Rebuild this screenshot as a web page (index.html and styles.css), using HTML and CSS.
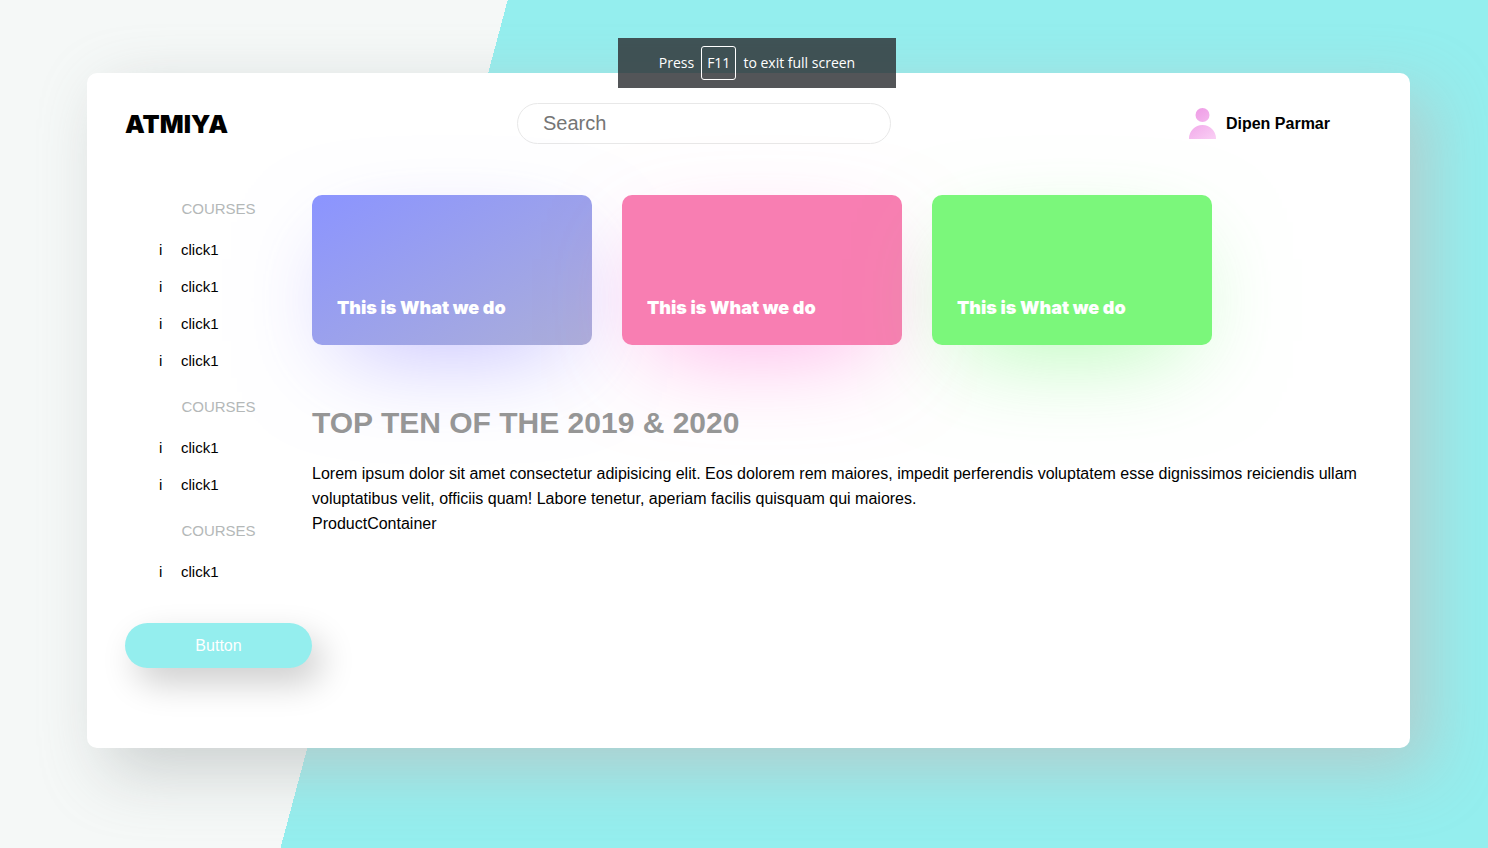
FILE: index.html
```html
<!DOCTYPE html>
<html lang="en">
<head>
<meta charset="utf-8">
<title>ATMIYA</title>
<meta name="viewport" content="width=device-width, initial-scale=1">
<link rel="stylesheet" href="styles.css">
</head>
<body>
<div class="panel">
  <header class="header">
    <h1 class="logo">ATMIYA</h1>
    <input class="search" type="search" placeholder="Search" aria-label="Search">
    <div class="user">
      <svg class="avatar" viewBox="0 0 28 32" aria-hidden="true">
        <defs>
          <linearGradient id="skin" gradientUnits="userSpaceOnUse" x1="4" y1="1" x2="26" y2="33">
            <stop offset="0" stop-color="#ee9ae5"/>
            <stop offset="1" stop-color="#fad0f5"/>
          </linearGradient>
        </defs>
        <circle cx="14.500" cy="7" r="7" fill="url(#skin)"/>
        <path d="M1 31V30.500A13.500 13.500 0 0 1 28 30.500V31Z" fill="url(#skin)"/>
      </svg>
      <span class="user-name">Dipen Parmar</span>
    </div>
  </header>
  <div class="body">
    <nav class="sidebar">
      <section class="group">
        <h2 class="group-title">COURSES</h2>
        <a class="item" href="#"><span class="item-icon">i</span>click1</a>
        <a class="item" href="#"><span class="item-icon">i</span>click1</a>
        <a class="item" href="#"><span class="item-icon">i</span>click1</a>
        <a class="item" href="#"><span class="item-icon">i</span>click1</a>
      </section>
      <section class="group">
        <h2 class="group-title">COURSES</h2>
        <a class="item" href="#"><span class="item-icon">i</span>click1</a>
        <a class="item" href="#"><span class="item-icon">i</span>click1</a>
      </section>
      <section class="group">
        <h2 class="group-title">COURSES</h2>
        <a class="item" href="#"><span class="item-icon">i</span>click1</a>
      </section>
      <button class="button" type="button">Button</button>
    </nav>
    <main class="main">
      <div class="cards">
        <article class="card card-blue">This is What we do</article>
        <article class="card card-pink">This is What we do</article>
        <article class="card card-green">This is What we do</article>
      </div>
      <h2 class="title">TOP TEN OF THE 2019 &amp; 2020</h2>
      <p class="text">Lorem ipsum dolor sit amet consectetur adipisicing elit. Eos dolorem rem maiores, impedit perferendis voluptatem esse dignissimos reiciendis ullam voluptatibus velit, officiis quam! Labore tenetur, aperiam facilis quisquam qui maiores.</p>
      <div class="text">ProductContainer</div>
    </main>
  </div>
</div>
<div class="toast" role="status"><span>Press</span><kbd class="key">F11</kbd><span>to exit full screen</span></div>
</body>
</html>
```
FILE: styles.css
```css
* {
  box-sizing: border-box;
  margin: 0;
}

body {
  display: grid;
  min-height: 100vh;
  padding: 73px 78px 100px 87px;
  background: linear-gradient(105deg, #f5f8f7 29.6%, #94eeee 29.6%);
  font-family: "Liberation Sans", Arial, sans-serif;
  font-size: 16px;
  color: #000;
}

.panel {
  padding: 30px 38px;
  border-radius: 10px;
  background: #fff;
  box-shadow: 20px 22px 65px rgba(188, 194, 194, 0.75);
}

.header {
  display: flex;
  align-items: center;
  justify-content: space-between;
  padding-right: 42px;
}

.logo {
  font-family: Inter, "Liberation Sans", sans-serif;
  font-size: 25px;
  font-weight: 900;
  line-height: 28px;
}

.search {
  width: 374px;
  height: 41px;
  margin-right: 8px;
  padding: 0 25px;
  border: 1px solid #e8e8e8;
  border-radius: 21px;
  background: transparent;
  font-family: inherit;
  font-size: 20px;
  outline: none;
}

.search::placeholder {
  color: #757575;
}

.user {
  display: flex;
  align-items: center;
  gap: 10px;
}

.avatar {
  width: 28px;
  height: 32px;
}

.user-name {
  font-weight: 700;
}

.body {
  display: grid;
  grid-template-columns: 187px 1fr;
  padding-top: 51px;
}

.sidebar {
  padding-top: 5px;
  font-size: 15px;
}

.group {
  margin-bottom: 19px;
}

.group-title {
  padding-bottom: 13px;
  font-size: 15px;
  font-weight: 400;
  line-height: 18px;
  text-align: center;
  color: #b4b8b8;
}

.item {
  display: flex;
  padding-left: 34px;
  line-height: 37px;
  color: #000;
  text-decoration: none;
}

.item-icon {
  width: 22px;
}

.button {
  width: 100%;
  height: 45px;
  margin-top: 14px;
  border: 0;
  border-radius: 23px;
  background: #94eeee;
  box-shadow: 10px 15px 35px rgba(0, 0, 0, 0.2);
  font-family: inherit;
  font-size: 16px;
  color: #fff;
}

.cards {
  display: flex;
  gap: 30px;
}

.card {
  display: flex;
  align-items: flex-end;
  width: 280px;
  height: 150px;
  padding: 25px;
  border-radius: 10px;
  font-family: Inter, "Liberation Sans", sans-serif;
  font-size: 18px;
  font-weight: 900;
  line-height: 24px;
  white-space: nowrap;
  color: #fff;
}

.card-blue {
  background: linear-gradient(150deg, #8b94ff, #abaed9);
  box-shadow: 0 30px 100px -30px rgba(139, 128, 255, 0.6);
}

.card-pink {
  background: #f87eb2;
  box-shadow: 0 30px 100px -30px rgba(255, 105, 210, 0.6);
}

.card-green {
  background: #7bf77b;
  box-shadow: 0 30px 100px -30px rgba(110, 247, 110, 0.6);
}

.title {
  margin: 60px 0 21px;
  font-size: 30px;
  line-height: 35px;
  color: #969696;
}

.text {
  line-height: 25px;
}

.toast {
  position: absolute;
  top: 38px;
  left: calc(50% + 13px);
  display: flex;
  align-items: center;
  justify-content: center;
  gap: 7px;
  width: 278px;
  height: 50px;
  transform: translateX(-50%);
  background: rgba(43, 45, 49, 0.81);
  font-family: "Open Sans", "Noto Sans", sans-serif;
  font-size: 14px;
  line-height: 20px;
  color: #fff;
}

.key {
  padding: 0 5px;
  border: 1px solid #fff;
  border-radius: 3px;
  font-family: inherit;
  font-size: 14px;
  line-height: 32px;
}
```
